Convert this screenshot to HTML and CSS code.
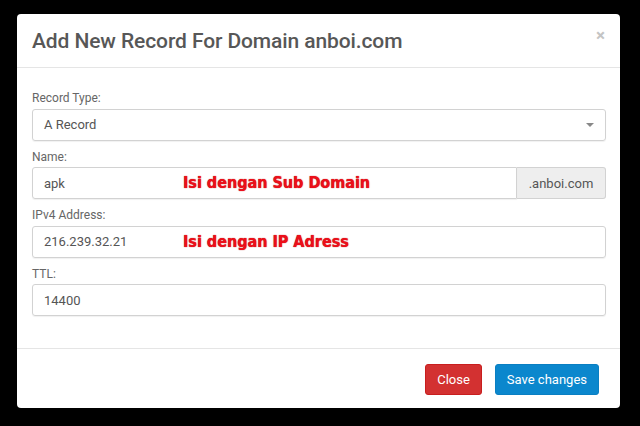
FILE: index.html
```html
<!DOCTYPE html>
<html lang="en">
<head>
    <meta charset="UTF-8">
    <meta name="viewport" content="width=device-width, initial-scale=1.0">
    <title>Add New Record</title>
    <link rel="stylesheet" href="styles.css">
</head>
<body>
    <div class="modal">
        <div class="modal-header">
            <h4 class="modal-title">Add New Record For Domain anboi.com</h4>
            <span class="close">&times;</span>
        </div>

        <div class="modal-body">
            <div class="form-group">
                <label>Record Type:</label>
                <div class="form-control select">
                    <span>A Record</span>
                    <span class="caret"></span>
                </div>
            </div>

            <div class="form-group">
                <label>Name:</label>
                <div class="input-group">
                    <div class="form-control grow">
                        apk
                        <span class="note">Isi dengan Sub Domain</span>
                    </div>
                    <span class="addon">.anboi.com</span>
                </div>
            </div>

            <div class="form-group">
                <label>IPv4 Address:</label>
                <div class="form-control">
                    216.239.32.21
                    <span class="note">Isi dengan IP Adress</span>
                </div>
            </div>

            <div class="form-group">
                <label>TTL:</label>
                <div class="form-control">14400</div>
            </div>
        </div>

        <div class="modal-footer">
            <button class="btn btn-danger">Close</button>
            <button class="btn btn-primary">Save changes</button>
        </div>
    </div>
</body>
</html>
```

FILE: styles.css
```css
body {
    margin: 0;
    padding: 14px 20px 0 17px;
    background-color: #000;
    font-family: Roboto, 'Liberation Sans', sans-serif;
    color: #555;
}
.modal {
    width: 603px;
    background-color: #fff;
    border-radius: 4px;
    box-shadow: 0 3px 9px rgba(0, 0, 0, 0.5);
}
.modal-header {
    height: 53px;
    padding: 0 15px;
    border-bottom: 1px solid #e5e5e5;
    display: flex;
    align-items: center;
    justify-content: space-between;
}
.modal-title {
    margin: 0;
    font-size: 21px;
    font-weight: 500;
    color: #575757;
    letter-spacing: -0.1px;
}
.close {
    font-size: 17px;
    font-weight: bold;
    color: #c4c4c4;
    margin-top: -12px;
}
.modal-body {
    padding: 22px 14px 24px 15px;
}
.form-group {
    margin-bottom: 8px;
}
.form-group label {
    display: block;
    font-size: 12px;
    line-height: 16px;
    margin-bottom: 2.5px;
    color: #666;
}
.form-control {
    position: relative;
    box-sizing: border-box;
    height: 32px;
    padding: 0 11px;
    border: 1px solid #d2d2d2;
    border-radius: 3px;
    box-shadow: 0 1px 1px rgba(0, 0, 0, 0.06);
    font-size: 13px;
    color: #555;
    display: flex;
    align-items: center;
}
.select {
    justify-content: space-between;
}
.caret {
    width: 0;
    height: 0;
    border-left: 4px solid transparent;
    border-right: 4px solid transparent;
    border-top: 4px solid #888;
}
.input-group {
    display: flex;
}
.grow {
    flex: 1;
    border-radius: 3px 0 0 3px;
}
.addon {
    box-sizing: border-box;
    width: 89px;
    height: 32px;
    border: 1px solid #d2d2d2;
    border-left: none;
    border-radius: 0 3px 3px 0;
    background-color: #eee;
    font-size: 13px;
    color: #555;
    display: flex;
    align-items: center;
    justify-content: center;
}
.note {
    position: absolute;
    left: 150px;
    top: 5px;
    font-family: 'DejaVu Sans', sans-serif;
    font-stretch: condensed;
    font-size: 16px;
    font-weight: bold;
    color: #ec0f1a;
    text-shadow: 0 0 1px #a00;
}
.modal-footer {
    padding: 15px 21px 13px;
    border-top: 1px solid #e5e5e5;
    display: flex;
    justify-content: flex-end;
    gap: 13px;
}
.btn {
    height: 31px;
    padding: 0 11px;
    border: 1px solid transparent;
    border-radius: 3px;
    font-family: Roboto, 'Liberation Sans', sans-serif;
    font-size: 13px;
    color: #fff;
}
.btn-danger {
    background-color: #d33131;
    border-color: #c81e1e;
}
.btn-primary {
    background-color: #0b87cd;
    border-color: #0a7fc2;
}
```
